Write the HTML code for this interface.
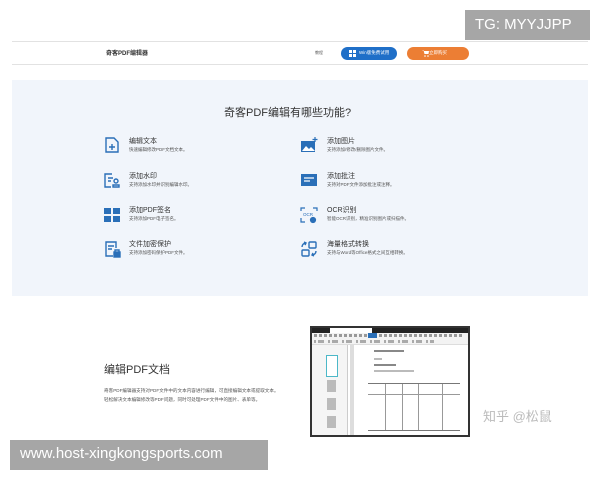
<!DOCTYPE html>
<html><head><meta charset="utf-8"><style>
*{margin:0;padding:0;box-sizing:border-box}
body{width:600px;height:480px;background:#fff;position:relative;overflow:hidden;font-family:"Liberation Sans","Noto Sans CJK SC",sans-serif;color:#333}
.a{position:absolute}
.t{font-size:7px;color:#333}
.s{font-size:4.5px;color:#555}
.ic{position:absolute;width:18px;height:18px}
.ln{position:absolute;height:1.5px;background:#bbb}
</style></head><body>
<div class="a" style="left:12px;top:41px;width:576px;height:1px;background:#e2e2e2"></div>
<div class="a" style="left:12px;top:64px;width:576px;height:1px;background:#e2e2e2"></div>
<div class="a t" style="left:106px;top:48px;font-size:6px;font-weight:bold">奇客PDF编辑器</div>
<div class="a" style="left:315px;top:50px;font-size:4px;color:#555">教程</div>
<div class="a" style="left:341px;top:47px;width:56px;height:13px;background:#1f6fc8;border-radius:7px;color:#fff;font-size:4.5px;padding:3px 0 0 18px">Win版免费试用</div>
<svg class="a" style="left:349px;top:50px" width="7" height="7" viewBox="0 0 7 7" fill="#fff"><rect x="0" y="0" width="3" height="3"/><rect x="4" y="0" width="3" height="3"/><rect x="0" y="4" width="3" height="3"/><rect x="4" y="4" width="3" height="3"/></svg>
<div class="a" style="left:407px;top:47px;width:62px;height:13px;background:#ec7e34;border-radius:7px;color:#fff;font-size:4.5px;padding:3px 0 0 22px">立即购买</div>
<svg class="a" style="left:422px;top:50px" width="7" height="7" viewBox="0 0 7 7" fill="#fff"><path d="M0 0h1.5l1 4h4l0.5-3H2z"/><circle cx="3" cy="6" r="0.8"/><circle cx="6" cy="6" r="0.8"/></svg>
<div class="a" style="left:465px;top:10px;width:125px;height:30px;background:#a6a6a6;color:#fff;font-size:15px;padding:6px 0 0 10px">TG: MYYJJPP</div>

<div class="a" style="left:12px;top:80px;width:576px;height:216px;background:#f1f5fb"></div>
<div class="a" style="left:224px;top:104px;font-size:11px;color:#333">奇客PDF编辑有哪些功能?</div>

<svg class="ic" style="left:103px;top:136px" viewBox="0 0 18 18" fill="none" stroke="#2a6fb8" stroke-width="1.4"><path d="M3 2h8l4 4v10H3z"/><path d="M9 8v6M6 11h6"/></svg>
<div class="a t" style="left:129px;top:136px">编辑文本</div><div class="a s" style="left:129px;top:147px">快速编辑修改PDF文档文本。</div>
<svg class="ic" style="left:103px;top:171px" viewBox="0 0 18 18" fill="none" stroke="#2a6fb8" stroke-width="1.4"><path d="M9 3H2v13h6M5 7h5M5 10h3"/><circle cx="13" cy="10" r="2"/><path d="M10 16v-2h6v2z"/></svg>
<div class="a t" style="left:129px;top:171px">添加水印</div><div class="a s" style="left:129px;top:182px">支持添加水印并识别编辑水印。</div>
<svg class="ic" style="left:103px;top:206px" viewBox="0 0 18 18" fill="#2a6fb8"><rect x="1" y="2" width="7" height="6"/><rect x="10" y="2" width="7" height="6"/><rect x="1" y="10" width="7" height="6"/><rect x="10" y="10" width="7" height="6"/></svg>
<div class="a t" style="left:129px;top:205px">添加PDF签名</div><div class="a s" style="left:129px;top:216px">支持添加PDF电子签名。</div>
<svg class="ic" style="left:103px;top:240px" viewBox="0 0 18 18" fill="none" stroke="#2a6fb8" stroke-width="1.4"><path d="M10 16H3V2h10v6M5 6h6M5 9h4"/><rect x="11" y="12" width="6" height="5" fill="#2a6fb8"/><path d="M12 12v-2h4v2"/></svg>
<div class="a t" style="left:129px;top:239px">文件加密保护</div><div class="a s" style="left:129px;top:250px">支持添加密码保护PDF文件。</div>

<svg class="ic" style="left:300px;top:136px" viewBox="0 0 18 18"><rect x="1" y="5" width="14" height="11" fill="#2a6fb8"/><path d="M2 15l4-5 3 3 2-2 4 4z" fill="#fff"/><path d="M15 1v5M12.5 3.5h5" stroke="#2a6fb8" stroke-width="1.2"/></svg>
<div class="a t" style="left:327px;top:136px">添加图片</div><div class="a s" style="left:327px;top:147px">支持添加/修改/删除图片文件。</div>
<svg class="ic" style="left:300px;top:171px" viewBox="0 0 18 18"><rect x="1" y="3" width="16" height="12" fill="#2a6fb8"/><path d="M4 7h10M4 10h6" stroke="#fff" stroke-width="1.2"/></svg>
<div class="a t" style="left:327px;top:171px">添加批注</div><div class="a s" style="left:327px;top:182px">支持对PDF文件添加批注或注释。</div>
<svg class="ic" style="left:300px;top:206px" viewBox="0 0 18 18" fill="none" stroke="#2a6fb8" stroke-width="1.2"><path d="M1 5V2h4M13 2h4v3M1 12v4h4"/><text x="3" y="10" font-size="4.5" fill="#2a6fb8" stroke="none">OCR</text><circle cx="13" cy="14" r="2.5" fill="#2a6fb8"/></svg>
<div class="a t" style="left:327px;top:205px">OCR识别</div><div class="a s" style="left:327px;top:216px">智能OCR识别，精准识别图片或扫描件。</div>
<svg class="ic" style="left:300px;top:240px" viewBox="0 0 18 18" fill="none" stroke="#2a6fb8" stroke-width="1.4"><rect x="9" y="2" width="7" height="6" rx="1"/><rect x="2" y="10" width="7" height="6" rx="1"/><path d="M2 7a4 4 0 0 1 4-4M4 2l2 1-1 2M16 11a4 4 0 0 1-4 4M14 16l-2-1 1-2"/></svg>
<div class="a t" style="left:327px;top:239px">海量格式转换</div><div class="a s" style="left:327px;top:250px">支持与Word等Office格式之间互相转换。</div>

<div class="a" style="left:104px;top:361px;font-size:11px;color:#333">编辑PDF文档</div>
<div class="a s" style="left:104px;top:386px;font-size:4.6px;line-height:9px">奇客PDF编辑器支持对PDF文件中的文本内容进行编辑，可直接编辑文本或提取文本。<br>轻松解决文本编辑修改等PDF问题，同时可处理PDF文件中的图片、表单等。</div>

<div class="a" style="left:310px;top:326px;width:160px;height:111px;border:2px solid #333;background:#fff;overflow:hidden">
 <div style="height:5px;background:#222"></div>
 <div class="a" style="left:18px;top:0;width:42px;height:5px;background:#fff"></div>
 <div style="height:12px;background:#f3f3f3;border-bottom:1px solid #ddd;position:relative">
  <div class="a" style="left:2px;top:1px;width:150px;height:3px;background:repeating-linear-gradient(90deg,#999 0 3px,transparent 3px 5px)"></div>
  <div class="a" style="left:56px;top:0;width:9px;height:5px;background:#2a6fb8"></div>
  <div class="a" style="left:2px;top:7px;width:120px;height:3px;background:repeating-linear-gradient(90deg,#aaa 0 2px,transparent 2px 4px,#aaa 4px 10px,transparent 10px 14px)"></div>
 </div>
 <div class="a" style="left:0;top:17px;width:36px;height:92px;background:#f5f5f5;border-right:1px solid #ccc"></div>
 <div class="a" style="left:38px;top:17px;width:4px;height:92px;background:#ddd"></div>
 <div class="a" style="left:14px;top:27px;width:12px;height:22px;border:1px solid #4cb8c8;background:#fff"></div>
 <div class="a" style="left:15px;top:52px;width:9px;height:12px;background:#bbb"></div>
 <div class="a" style="left:15px;top:70px;width:9px;height:12px;background:#bbb"></div>
 <div class="a" style="left:15px;top:88px;width:9px;height:12px;background:#bbb"></div>
 <div class="ln" style="left:62px;top:22px;width:30px;background:#888"></div>
 <div class="ln" style="left:62px;top:30px;width:8px"></div>
 <div class="ln" style="left:62px;top:36px;width:22px;background:#888"></div>
 <div class="ln" style="left:62px;top:42px;width:40px"></div>
 <div class="a" style="left:56px;top:55px;width:92px;height:48px;border-top:1px solid #777;border-bottom:1px solid #777;background:linear-gradient(90deg,transparent 17px,#999 17px 18px,transparent 18px 34px,#999 34px 35px,transparent 35px 50px,#999 50px 51px,transparent 51px 74px,#999 74px 75px,transparent 75px)"></div>
 <div class="a" style="left:56px;top:66px;width:92px;height:1px;background:#999"></div>
 <div class="ln" style="left:62px;top:108px;width:80px"></div>
</div>
<div class="a" style="left:483px;top:406px;font-size:13px;color:#bbb">知乎 @松鼠</div>
<div class="a" style="left:10px;top:440px;width:258px;height:30px;background:#a6a6a6;color:#fff;font-size:15px;padding:5px 0 0 10px">www.host-xingkongsports.com</div>
</body></html>
